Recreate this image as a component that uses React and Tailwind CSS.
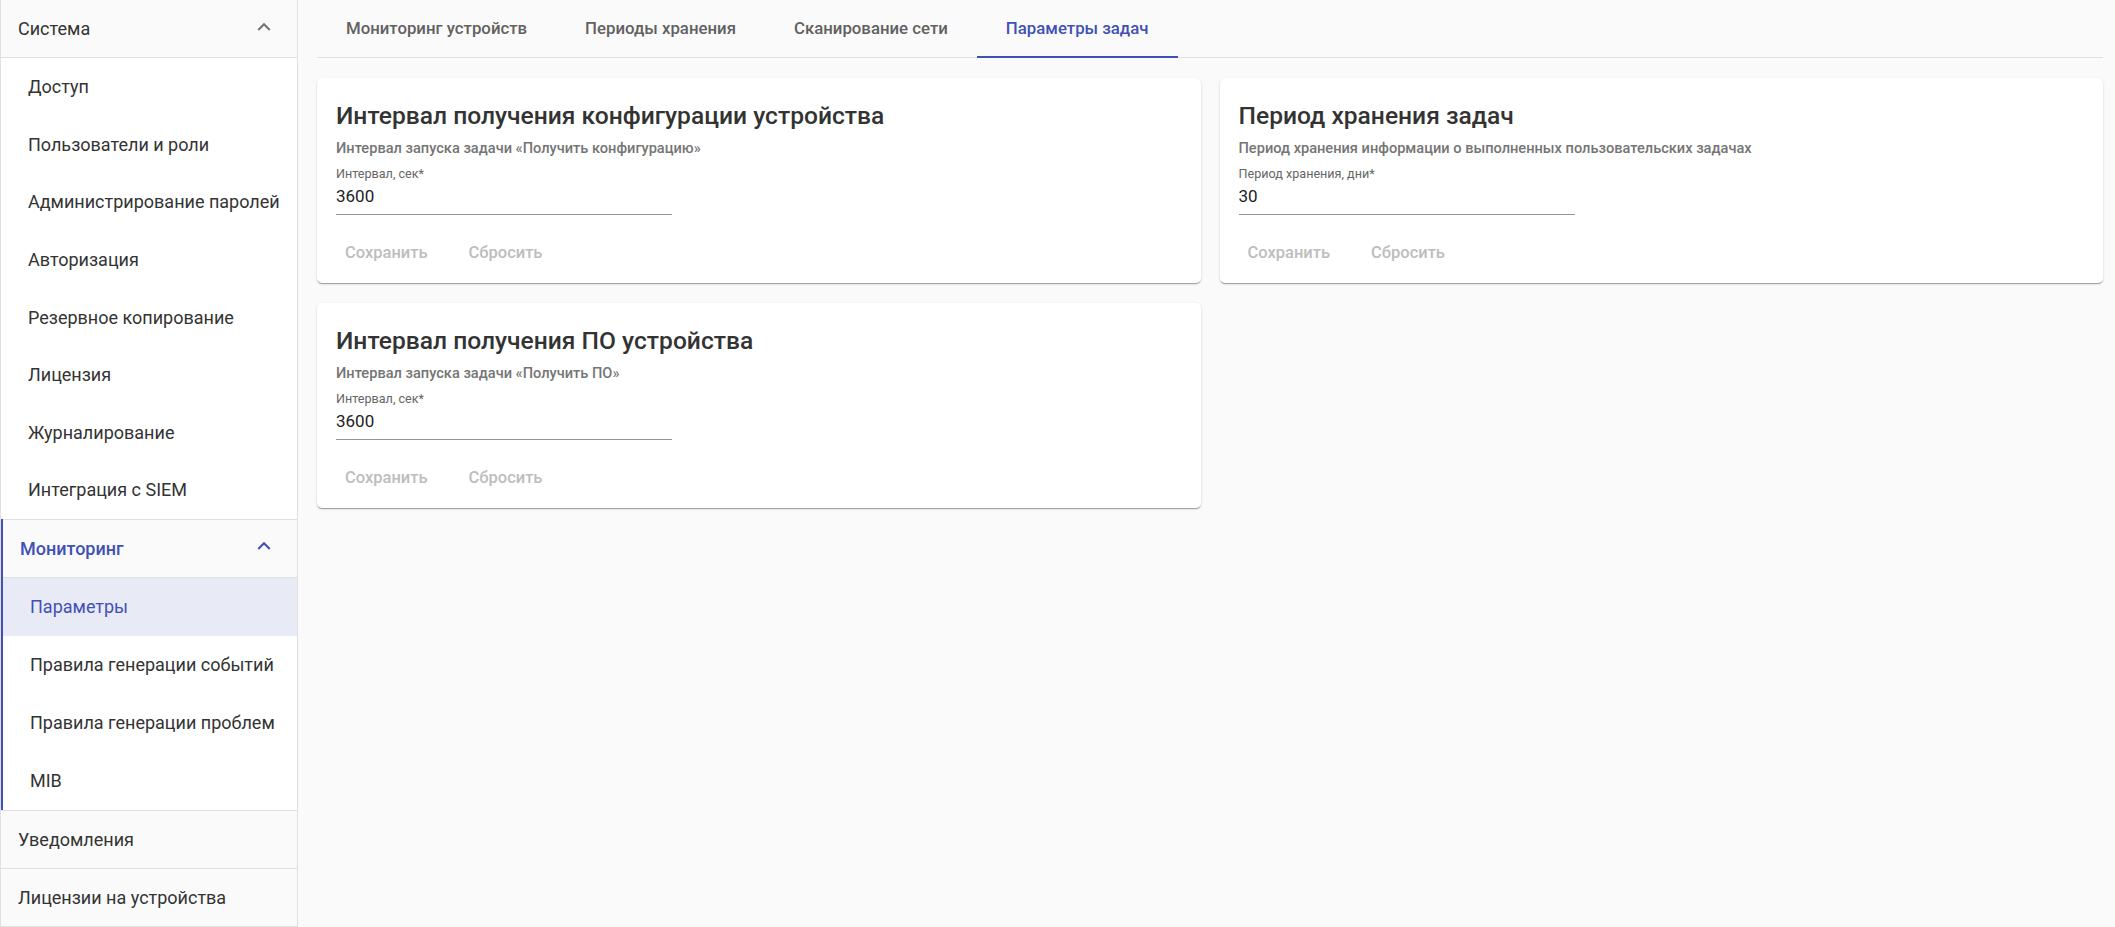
import { useState } from 'react';

const systemItems = ['Доступ', 'Пользователи и роли', 'Администрирование паролей', 'Авторизация', 'Резервное копирование', 'Лицензия', 'Журналирование', 'Интеграция с SIEM'];
const monitoringItems = ['Параметры', 'Правила генерации событий', 'Правила генерации проблем', 'MIB'];
const tabs = ['Мониторинг устройств', 'Периоды хранения', 'Сканирование сети', 'Параметры задач'];

const cards = [
  { title: 'Интервал получения конфигурации устройства', subtitle: 'Интервал запуска задачи «Получить конфигурацию»', label: 'Интервал, сек*', value: '3600' },
  { title: 'Период хранения задач', subtitle: 'Период хранения информации о выполненных пользовательских задачах', label: 'Период хранения, дни*', value: '30' },
  { title: 'Интервал получения ПО устройства', subtitle: 'Интервал запуска задачи «Получить ПО»', label: 'Интервал, сек*', value: '3600' },
];

const ChevronUp = ({ className }) => (
  <svg viewBox="0 0 24 24" className={className} fill="currentColor">
    <path d="M12 8l-6 6 1.41 1.41L12 10.83l4.59 4.58L18 14z" />
  </svg>
);

const GroupHeader = ({ label, open, active }) => (
  <div className="flex items-center justify-between h-[58px] pl-[17px] pr-[20px] bg-[#fafafa] border-b border-[#e0e0e0]">
    <span className={`text-[18px] ${active ? 'text-[#3f51b5] font-medium' : 'text-[#333]'}`}>{label}</span>
    {open && <ChevronUp className={`w-[26px] h-[26px] -mt-[4px] ${active ? 'text-[#3f51b5]' : 'text-[#757575]'}`} />}
  </div>
);

const SettingCard = ({ card }) => {
  const [value, setValue] = useState(card.value);
  return (
    <div className="bg-white rounded-[5px] shadow-[0_2px_1px_-1px_rgba(0,0,0,0.2),0_1px_1px_0_rgba(0,0,0,0.14),0_1px_3px_0_rgba(0,0,0,0.12)]">
      <div className="pt-[22px] px-[19px]">
        <h2 className="text-[24.6px] leading-[32px] font-medium text-[#333]">{card.title}</h2>
        <p className="mt-[6px] text-[14.6px] leading-[20px] font-medium text-[#757575]">{card.subtitle}</p>
        <div className="mt-[8px] w-[336px]">
          <label className="block text-[12.6px] leading-[16px] text-[#666]">{card.label}</label>
          <input value={value} onChange={(e) => setValue(e.target.value)} className="block w-full pt-[2px] pb-[6px] text-[17px] leading-[24px] text-[#212121] bg-transparent border-b border-[#949494] outline-none" />
        </div>
      </div>
      <div className="flex items-center gap-[21px] mt-[14px] mb-[6px] h-[48px] px-[18px]">
        <button disabled className="h-full px-[10px] text-[16.5px] font-medium text-[#bdbdbd]">Сохранить</button>
        <button disabled className="h-full px-[10px] text-[16.5px] font-medium text-[#bdbdbd]">Сбросить</button>
      </div>
    </div>
  );
};

export default function App() {
  const [activeTab, setActiveTab] = useState(3);
  return (
    <div className="flex h-[927px] bg-[#fafafa] font-['Roboto',sans-serif] overflow-hidden">
      <aside className="w-[298px] shrink-0 border-l border-r border-[#e0e0e0] bg-[#fafafa]">
        <GroupHeader label="Система" open />
        <div className="bg-white">
          {systemItems.map((item) => (
            <div key={item} className="flex items-center h-[57.6px] pl-[27px] text-[18px] text-[#333]">{item}</div>
          ))}
        </div>
        <div className="border-l-2 border-[#3f51b5]">
          <div className="flex items-center justify-between h-[59px] pl-[17px] pr-[20px] bg-[#fafafa] border-t border-b border-[#e0e0e0]">
            <span className="text-[18px] text-[#3f51b5] font-medium">Мониторинг</span>
            <ChevronUp className="w-[26px] h-[26px] -mt-[4px] text-[#3f51b5]" />
          </div>
          <div className="bg-white">
            {monitoringItems.map((item, i) => (
              <div key={item} className={`flex items-center h-[58px] pl-[27px] text-[18px] ${i === 0 ? 'bg-[#e8eaf6] text-[#3f51b5]' : 'text-[#333]'}`}>{item}</div>
            ))}
          </div>
        </div>
        <div className="border-t border-[#e0e0e0]">
          <GroupHeader label="Уведомления" />
          <GroupHeader label="Лицензии на устройства" />
        </div>
      </aside>
      <main className="flex-1 pl-[19px] pr-[12px]">
        <div className="flex h-[58px] border-b border-[#e0e0e0]">
          {tabs.map((tab, i) => (
            <button key={tab} onClick={() => setActiveTab(i)} className={`relative px-[29px] text-[16.8px] font-medium ${i === activeTab ? 'text-[#3f51b5]' : 'text-[#616161]'}`}>
              {tab}
              {i === activeTab && <span className="absolute left-0 right-0 -bottom-px h-[2px] bg-[#3f51b5]" />}
            </button>
          ))}
        </div>
        <div className="grid grid-cols-2 gap-x-[19px] gap-y-[20px] mt-[20px] items-start">
          {cards.map((c) => (
            <SettingCard key={c.title} card={c} />
          ))}
        </div>
      </main>
    </div>
  );
}
